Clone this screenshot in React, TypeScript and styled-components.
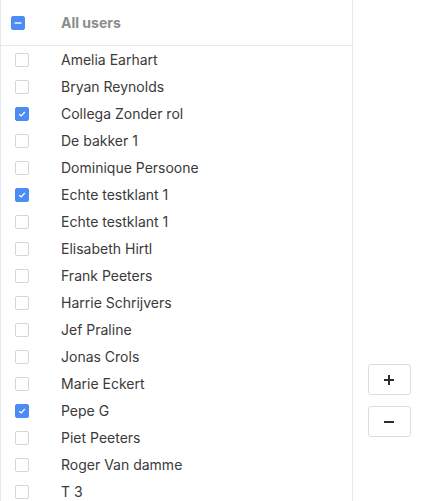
import React from "react"
import styled, { createGlobalStyle } from "styled-components"

const GlobalStyle = createGlobalStyle`
  html, body {
    margin: 0;
    padding: 0;
    background: #ffffff;
    font-family: Inter, "Liberation Sans", sans-serif;
  }
`

const Page = styled.div`
  display: flex;
  min-height: 801px;
`

const ListPanel = styled.div`
  width: 351px;
  flex-shrink: 0;
  border-left: 1px solid #e6e8ef;
  border-right: 1px solid #e6e8ef;
`

const HeaderRow = styled.div`
  display: flex;
  align-items: center;
  height: 45px;
  border-bottom: 1px solid #e8e8e8;
`

const Row = styled.div`
  display: flex;
  align-items: center;
  height: 27px;
`

const BoxCell = styled.div<{ $indent: number }>`
  width: 60px;
  display: flex;
  padding-left: ${(p) => p.$indent}px;
  box-sizing: border-box;
`

const Box = styled.span<{ $on?: boolean }>`
  width: 14px;
  height: 14px;
  box-sizing: border-box;
  border-radius: 2px;
  display: flex;
  align-items: center;
  justify-content: center;
  background: ${(p) => (p.$on ? "#4c8cf5" : "#ffffff")};
  border: 1px solid ${(p) => (p.$on ? "#4c8cf5" : "#d4d6dc")};
`

const HeaderLabel = styled.span`
  font-size: 14px;
  font-weight: 700;
  color: #8c8c8c;
`

const Name = styled.span`
  font-size: 14px;
  color: #3a3a3a;
`

const Side = styled.div`
  flex: 1;
  display: flex;
  flex-direction: column;
  justify-content: center;
  align-items: center;
  gap: 11px;
  padding-left: 2px;
`

const ActionButton = styled.button`
  width: 43px;
  height: 31px;
  background: #ffffff;
  border: 1px solid #dcdde1;
  border-radius: 3px;
  display: flex;
  align-items: center;
  justify-content: center;
  padding: 0;
  cursor: pointer;
`

const users: [string, boolean][] = [
  ["Amelia Earhart", false],
  ["Bryan Reynolds", false],
  ["Collega Zonder rol", true],
  ["De bakker 1", false],
  ["Dominique Persoone", false],
  ["Echte testklant 1", true],
  ["Echte testklant 1", false],
  ["Elisabeth Hirtl", false],
  ["Frank Peeters", false],
  ["Harrie Schrijvers", false],
  ["Jef Praline", false],
  ["Jonas Crols", false],
  ["Marie Eckert", false],
  ["Pepe G", true],
  ["Piet Peeters", false],
  ["Roger Van damme", false],
  ["T 3", false],
]

const Check = () => (
  <svg width="10" height="10" viewBox="0 0 10 10">
    <path d="M2.2 5.2 L4.2 7 L7.8 3" fill="none" stroke="#ffffff" strokeWidth="1.2" />
  </svg>
)

const Dash = () => (
  <svg width="8" height="4" viewBox="0 0 8 4">
    <rect x="0.5" y="1" width="7" height="2" fill="#c9dbfb" />
  </svg>
)

const App: React.FC = () => {
  return (
    <>
      <GlobalStyle />
      <Page>
        <ListPanel>
          <HeaderRow>
            <BoxCell $indent={10}>
              <Box $on>
                <Dash />
              </Box>
            </BoxCell>
            <HeaderLabel>All users</HeaderLabel>
          </HeaderRow>
          {users.map(([name, on], i) => (
            <Row key={i}>
              <BoxCell $indent={14}>
                <Box $on={on}>{on && <Check />}</Box>
              </BoxCell>
              <Name>{name}</Name>
            </Row>
          ))}
        </ListPanel>
        <Side>
          <ActionButton>
            <svg width="12" height="12" viewBox="0 0 12 12">
              <path d="M6 1 V11 M1 6 H11" stroke="#2b2b2b" strokeWidth="2" />
            </svg>
          </ActionButton>
          <ActionButton>
            <svg width="12" height="12" viewBox="0 0 12 12">
              <path d="M1 6 H11" stroke="#2b2b2b" strokeWidth="2" />
            </svg>
          </ActionButton>
        </Side>
      </Page>
    </>
  )
}

export default App
